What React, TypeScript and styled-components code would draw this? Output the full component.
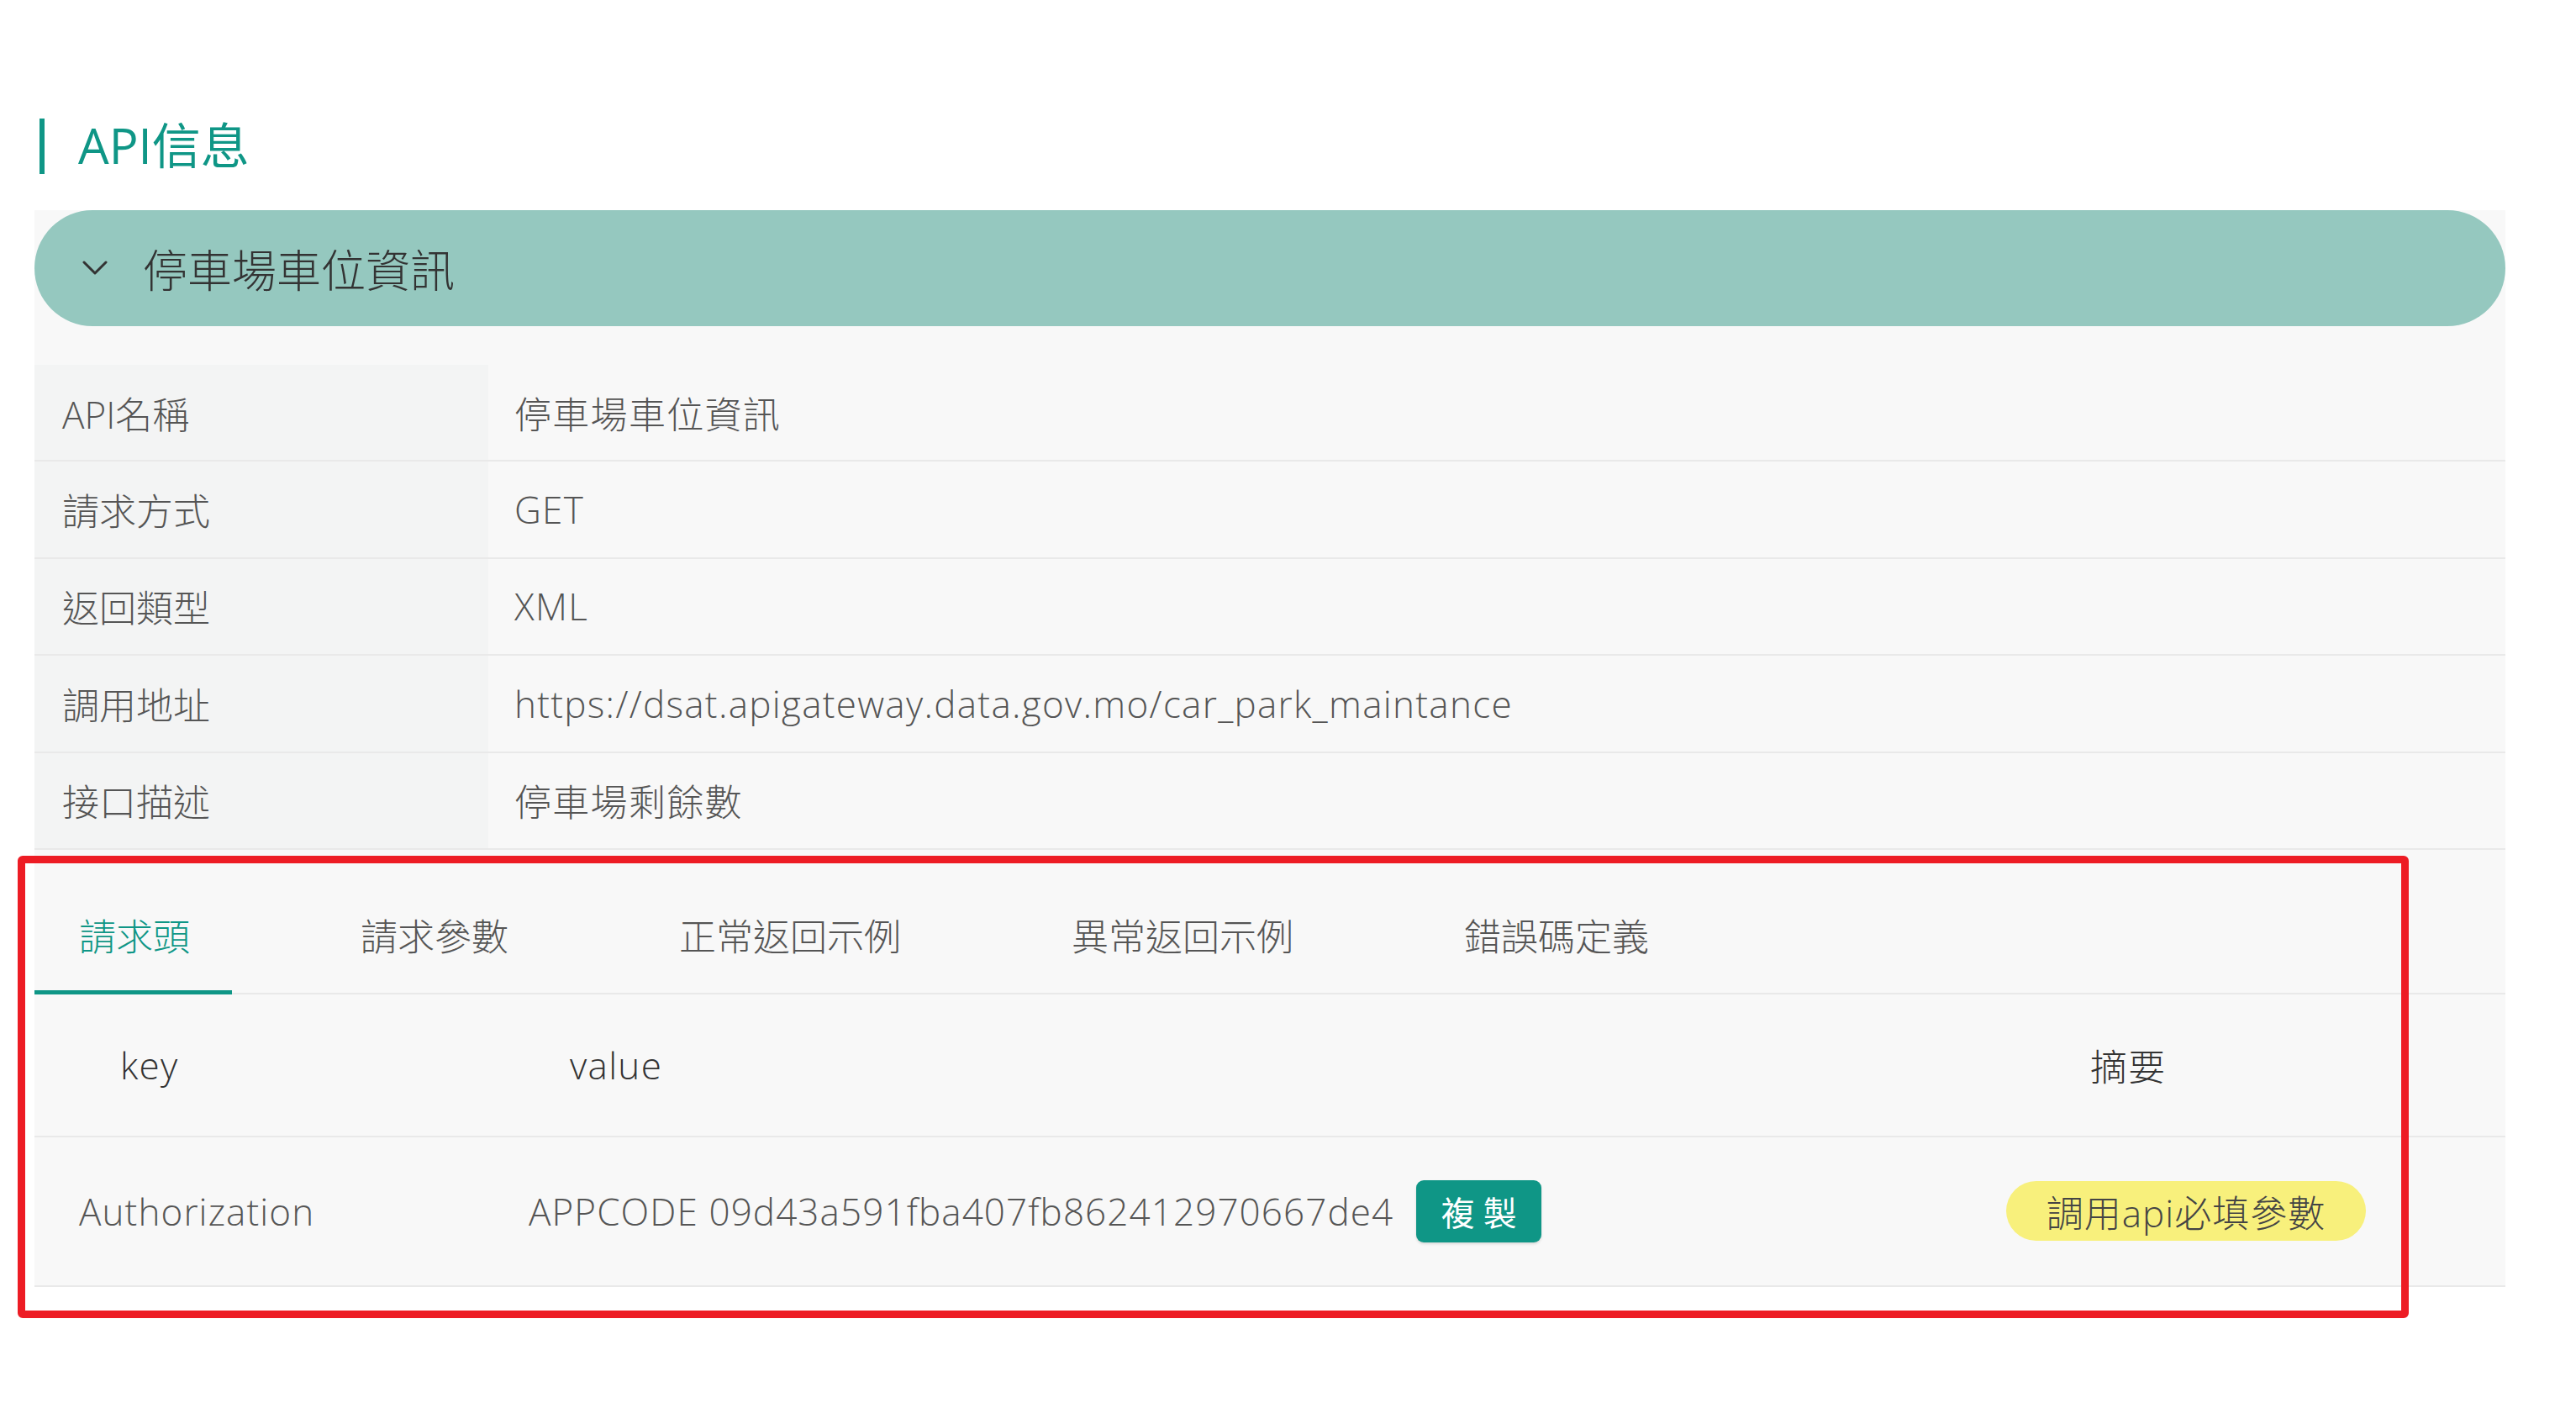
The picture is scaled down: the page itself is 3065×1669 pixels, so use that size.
import React from 'react';
import styled, { createGlobalStyle } from 'styled-components';

const GlobalStyle = createGlobalStyle`
  html, body {
    margin: 0;
    padding: 0;
    background: #ffffff;
  }
  body {
    font-family: "Open Sans", "Noto Sans CJK TC", sans-serif;
    font-weight: 300;
  }
`;

const TEAL = '#0f9686';

const Page = styled.div`
  position: relative;
  width: 2940px;
  padding: 141px 0 100px 41px;
`;

const Title = styled.h2`
  display: flex;
  align-items: center;
  gap: 40px;
  height: 66px;
  margin: 0 0 43px 6px;
  font-size: 58px;
  font-weight: 400;
  color: ${TEAL};
`;

const TitleText = styled.span`
  padding-bottom: 8px;
`;

const TitleBar = styled.span`
  width: 6px;
  height: 66px;
  background: ${TEAL};
`;

const Panel = styled.section`
  background: #f8f8f8;
`;

const Pill = styled.div`
  display: flex;
  align-items: center;
  gap: 42px;
  height: 138px;
  padding-left: 57px;
  border-radius: 69px;
  background: #95c8bf;
  color: #333;
  font-size: 53px;
  font-weight: 300;
`;

const InfoTable = styled.div`
  margin-top: 46px;
`;

const InfoRow = styled.div`
  display: grid;
  grid-template-columns: 540px 1fr;
  height: 115.4px;
  border-bottom: 2px solid #e9e9e9;
  box-sizing: border-box;
  font-size: 44px;
  color: #555;
`;

const InfoLabel = styled.div`
  display: flex;
  align-items: center;
  padding-left: 33px;
  background: #f3f4f4;
`;

const InfoValue = styled.div`
  display: flex;
  align-items: center;
  padding-left: 31px;
  letter-spacing: 1.3px;
`;

const Detail = styled.div`
  position: relative;
`;

const TabBar = styled.div`
  display: flex;
  align-items: flex-end;
  gap: 100px;
  height: 172px;
  border-bottom: 2px solid #e9e9e9;
  box-sizing: border-box;
`;

const Tab = styled.div<{ $active?: boolean }>`
  display: flex;
  align-items: center;
  height: 136px;
  padding: 0 50px 0 53px;
  margin-bottom: -2px;
  box-sizing: border-box;
  font-size: 44px;
  color: ${(p) => (p.$active ? TEAL : '#555')};
  border-bottom: 5px solid ${(p) => (p.$active ? TEAL : 'transparent')};
`;

const ParamRow = styled.div<{ $height: number }>`
  display: grid;
  grid-template-columns: 535px 1fr 620px;
  align-items: center;
  height: ${(p) => p.$height}px;
  border-bottom: 2px solid #e9e9e9;
  box-sizing: border-box;
  font-size: 44px;
`;

const HeadCell = styled.div<{ $pad: number }>`
  padding-left: ${(p) => p.$pad}px;
  color: #333;
  letter-spacing: 1.3px;
`;

const DataCell = styled.div<{ $pad: number }>`
  display: flex;
  align-items: center;
  gap: 27px;
  padding-left: ${(p) => p.$pad}px;
  color: #555;
  letter-spacing: 1.1px;
`;

const CopyButton = styled.button`
  width: 149px;
  height: 74px;
  border: none;
  border-radius: 9px;
  background: ${TEAL};
  color: #fff;
  font-family: "Noto Sans CJK TC", sans-serif;
  font-size: 40px;
  font-weight: 400;
  letter-spacing: 10px;
  padding: 0 0 0 10px;
  box-shadow: 0 2px 3px rgba(0, 0, 0, 0.12);
`;

const Badge = styled.span`
  display: inline-flex;
  align-items: center;
  justify-content: center;
  width: 428px;
  height: 71px;
  border-radius: 36px;
  background: #f8f07c;
  color: #444;
  font-size: 44px;
  letter-spacing: 1px;
`;

const Annotation = styled.div`
  position: absolute;
  left: -20px;
  top: 7px;
  width: 2845px;
  height: 550px;
  border: 9px solid #ed1c24;
  border-radius: 6px;
  box-sizing: border-box;
  pointer-events: none;
`;

const Chevron = () => (
  <svg width="30" height="18" viewBox="0 0 30 18" fill="none">
    <path d="M2 2 L15 15 L28 2" stroke="#333" strokeWidth="3" strokeLinecap="round" strokeLinejoin="round" />
  </svg>
);

const info: [string, string][] = [
  ['API名稱', '停車場車位資訊'],
  ['請求方式', 'GET'],
  ['返回類型', 'XML'],
  ['調用地址', 'https://dsat.apigateway.data.gov.mo/car_park_maintance'],
  ['接口描述', '停車場剩餘數'],
];

const tabs = ['請求頭', '請求參數', '正常返回示例', '異常返回示例', '錯誤碼定義'];

export default function App() {
  return (
    <>
      <GlobalStyle />
      <Page>
        <Title>
          <TitleBar />
          <TitleText>API信息</TitleText>
        </Title>
        <Panel>
          <Pill>
            <Chevron />
            停車場車位資訊
          </Pill>
          <InfoTable>
            {info.map(([k, v]) => (
              <InfoRow key={k}>
                <InfoLabel>{k}</InfoLabel>
                <InfoValue>{v}</InfoValue>
              </InfoRow>
            ))}
          </InfoTable>
          <Detail>
            <TabBar>
              {tabs.map((t, i) => (
                <Tab key={t} $active={i === 0}>
                  {t}
                </Tab>
              ))}
            </TabBar>
            <ParamRow $height={170}>
              <HeadCell $pad={102}>key</HeadCell>
              <HeadCell $pad={102}>value</HeadCell>
              <HeadCell $pad={126}>摘要</HeadCell>
            </ParamRow>
            <ParamRow $height={178}>
              <DataCell $pad={53}>Authorization</DataCell>
              <DataCell $pad={53}>
                APPCODE 09d43a591fba407fb862412970667de4
                <CopyButton>複製</CopyButton>
              </DataCell>
              <DataCell $pad={26}>
                <Badge>調用api必填參數</Badge>
              </DataCell>
            </ParamRow>
            <Annotation />
          </Detail>
        </Panel>
      </Page>
    </>
  );
}
